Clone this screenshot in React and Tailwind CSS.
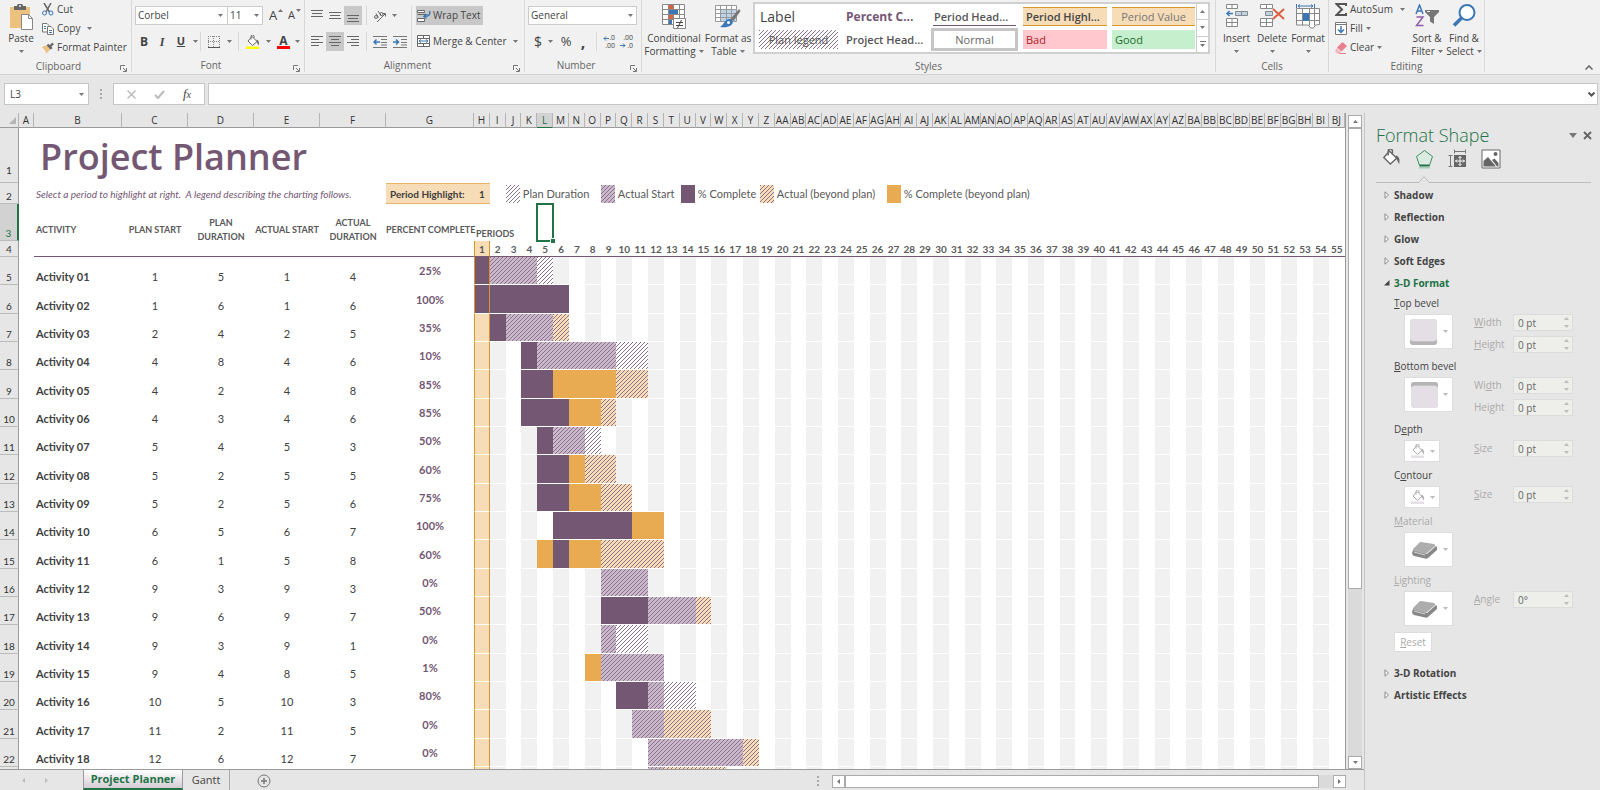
const columns = [
  "H", "I", "J", "K", "L", "M", "N", "O", "P", "Q", "R", "S", "T", "U", "V", "W", "X", "Y", "Z",
  ..."ABCDEFGHIJKLMNOPQRSTUVWXYZ".split("").map((c) => "A" + c),
  ..."ABCDEFGHIJ".split("").map((c) => "B" + c),
];

// bars: [kind, first period, last period]
// c = complete, a = actual, p = plan, y = complete beyond plan, b = actual beyond plan
const activities = [
  { plan: [1, 5], actual: [1, 4], pct: 25, bars: [["c", 1, 1], ["a", 2, 4], ["p", 5, 5]] },
  { plan: [1, 6], actual: [1, 6], pct: 100, bars: [["c", 1, 6]] },
  { plan: [2, 4], actual: [2, 5], pct: 35, bars: [["c", 2, 2], ["a", 3, 5], ["b", 6, 6]] },
  { plan: [4, 8], actual: [4, 6], pct: 10, bars: [["c", 4, 4], ["a", 5, 9], ["p", 10, 11]] },
  { plan: [4, 2], actual: [4, 8], pct: 85, bars: [["c", 4, 5], ["y", 6, 9], ["b", 10, 11]] },
  { plan: [4, 3], actual: [4, 6], pct: 85, bars: [["c", 4, 6], ["y", 7, 8], ["b", 9, 9]] },
  { plan: [5, 4], actual: [5, 3], pct: 50, bars: [["c", 5, 5], ["a", 6, 7], ["p", 8, 8]] },
  { plan: [5, 2], actual: [5, 5], pct: 60, bars: [["c", 5, 6], ["y", 7, 7], ["b", 8, 9]] },
  { plan: [5, 2], actual: [5, 6], pct: 75, bars: [["c", 5, 6], ["y", 7, 8], ["b", 9, 10]] },
  { plan: [6, 5], actual: [6, 7], pct: 100, bars: [["c", 6, 10], ["y", 11, 12]] },
  { plan: [6, 1], actual: [5, 8], pct: 60, bars: [["y", 5, 5], ["c", 6, 6], ["y", 7, 8], ["b", 9, 12]] },
  { plan: [9, 3], actual: [9, 3], pct: 0, bars: [["a", 9, 11]] },
  { plan: [9, 6], actual: [9, 7], pct: 50, bars: [["c", 9, 11], ["a", 12, 14], ["b", 15, 15]] },
  { plan: [9, 3], actual: [9, 1], pct: 0, bars: [["a", 9, 9], ["p", 10, 11]] },
  { plan: [9, 4], actual: [8, 5], pct: 1, bars: [["y", 8, 8], ["a", 9, 12]] },
  { plan: [10, 5], actual: [10, 3], pct: 80, bars: [["c", 10, 11], ["a", 12, 12], ["p", 13, 14]] },
  { plan: [11, 2], actual: [11, 5], pct: 0, bars: [["a", 11, 12], ["b", 13, 15]] },
  { plan: [12, 6], actual: [12, 7], pct: 0, bars: [["a", 12, 17], ["b", 18, 18]] },
];

const purpleHatch =
  "bg-[linear-gradient(135deg,#8a708a_12.5%,transparent_12.5%,transparent_50%,#8a708a_50%,#8a708a_62.5%,transparent_62.5%)] bg-[length:4px_4px]";

const fills = {
  c: "bg-[#735773]",
  y: "bg-[#e8ab52]",
  a: "bg-[#c9b9cb] " + purpleHatch,
  p: "bg-white " + purpleHatch,
  b: "bg-[#f6dcb7] " + purpleHatch,
};

const legend = [
  ["p", "Plan Duration", "w-[95px]"],
  ["a", "Actual Start", "w-[80px]"],
  ["c", "% Complete", "w-[79px]"],
  ["b", "Actual (beyond plan)", "w-[127px]"],
  ["y", "% Complete (beyond plan)", "w-[150px]"],
];

// Splits a row into table cells: period 1 always stands alone, bars span their periods
function segments(bars) {
  const out = [];
  let p = 1;
  while (p <= 55) {
    const bar = bars.find((b) => b[1] <= p && b[2] >= p);
    if (bar && p > 1) {
      out.push({ from: p, span: bar[2] - p + 1, kind: bar[0] });
      p = bar[2] + 1;
    } else {
      out.push({ from: p, span: 1, kind: bar ? bar[0] : null });
      p += 1;
    }
  }
  return out;
}

function Caret({ className = "" }) {
  return (
    <svg viewBox="0 0 5 3" className={"w-[5px] h-[3px] shrink-0 fill-[#777] " + className}>
      <path d="M0 0h5L2.5 3z" />
    </svg>
  );
}

function Group({ label, width, launcher, children }) {
  return (
    <section className={"relative flex flex-col shrink-0 border-r border-[#d8d8d8] h-[72px] " + width}>
      <div className="h-[60px]">{children}</div>
      <div className={"text-center leading-[14px] text-[#666] pt-[1px] " + (launcher ? "pr-[14px]" : "")}>{label}</div>
      {launcher && (
        <button aria-label={label + " settings"} className="absolute right-1 bottom-0">
          <svg viewBox="0 0 7 7" className="size-[7px]" fill="none" stroke="#777">
            <path d="M.5 5V.5H5M3 3l3 3M6.5 3v3.5H3" />
          </svg>
        </button>
      )}
    </section>
  );
}

function BigButton({ icon, lines, width }) {
  return (
    <button className={"flex flex-col items-center pt-1 leading-[13px] shrink-0 " + width}>
      <span className="h-7 flex items-start justify-center">{icon}</span>
      <span className="whitespace-nowrap">{lines[0]}</span>
      <span className="flex items-center gap-[3px] h-[13px] whitespace-nowrap">
        {lines[1]}
        <Caret />
      </span>
    </button>
  );
}

function ToolButton({ label, width = "w-[18px]", active, children }) {
  return (
    <button
      aria-label={label}
      className={"h-[19px] flex items-center justify-center shrink-0 " + width + (active ? " bg-[#c8c8c8]" : "")}
    >
      {children}
    </button>
  );
}

function Divider() {
  return <span className="w-px h-[19px] bg-[#d8d8d8] shrink-0" />;
}

// Horizontal rules of varying length used by all the paragraph icons
function Lines({ rows }) {
  return (
    <svg viewBox="0 0 13 13" className="size-[13px]" stroke="#666" fill="none">
      {rows.map(([x1, x2, y]) => (
        <path key={y} d={`M${x1} ${y}.5H${x2}`} />
      ))}
    </svg>
  );
}

function Indent({ flip }) {
  return (
    <svg viewBox="0 0 14 12" className="w-[14px] h-3" fill="none" stroke="#777">
      <path d="M0 .5h14M8 3.5h6M8 6.5h6M8 9h6M0 11.5h14" />
      <path d={flip ? "M0 6h5M3 3.5L5.5 6 3 8.5" : "M1 6h6M3.5 3.5L1 6l2.5 2.5"} stroke="#3c77b5" strokeWidth="1.5" />
    </svg>
  );
}

function Bucket({ color, underline, size = "size-[14px]" }) {
  return (
    <svg viewBox="0 0 14 14" className={size} fill="none">
      <path d="M6 1.5l5 5-4.5 4L2 6z" fill="#fff" stroke={color} />
      <path d="M5 4.5V1.5a1.5 1.5 0 0 1 3 0V3" stroke={color} />
      <path d="M10.500 4.5c2 .5 3 2.5 2.2 6-.8-1-1.2-2.5-2.2-4z" fill={color} />
      {underline && <path d="M0 11.5h13V14H0z" fill={underline} />}
    </svg>
  );
}

function ClipboardGroup() {
  return (
    <Group label="Clipboard" width="w-[132px]" launcher>
      <div className="flex">
        <BigButton
          width="w-[42px]"
          lines={["Paste", ""]}
          icon={
            <svg viewBox="0 0 24 26" className="w-6 h-[26px]">
              <path d="M1 3h20v21H1z" fill="#edc17e" />
              <path d="M5 2h3a3 2.5 0 0 1 6 0h3v4H5z" fill="#666" />
              <circle cx="11" cy="2" r="1" fill="#f1f1f1" />
              <path d="M12.5 10.5h7l4 4v11h-11z" fill="#fff" stroke="#888" />
              <path d="M19.5 10.5v4h4" fill="none" stroke="#888" />
            </svg>
          }
        />
        <div className="flex flex-col">
          <button className="flex items-center gap-[3px] h-[19px]">
            <svg viewBox="0 0 12 13" className="w-3 h-[13px]" fill="none">
              <path d="M2 0l5.5 9M9 0L4 9" stroke="#666" strokeWidth="1.5" />
              <circle cx="2.5" cy="10" r="2" stroke="#3c77b5" />
              <circle cx="9" cy="10" r="2" stroke="#3c77b5" />
            </svg>
            Cut
          </button>
          <button className="flex items-center gap-[3px] h-[19px]">
            <svg viewBox="0 0 12 12" className="size-3" fill="#fff" stroke="#777">
              <path d="M.5 .5H5l2 2V9H.5z" />
              <path d="M5.5 3.5H9l2.5 2.5v5.5h-6z" />
              <path d="M2 3.5h2M2 5.5h2M7 7.5h3M7 9.5h3" stroke="#3c77b5" />
            </svg>
            Copy
            <Caret className="ml-1" />
          </button>
          <button className="flex items-center gap-[3px] h-[19px] whitespace-nowrap">
            <svg viewBox="0 0 13 12" className="w-3 h-3">
              <path d="M0 5l5-2 4 4.5L4.5 12C4 9 2 7 0 5z" fill="#edc17e" />
              <path d="M5 3l2-1.5L8.5 3 11 0l2 2-2.8 2.5 1.3 1.7L9 7.5z" fill="#666" />
            </svg>
            Format Painter
          </button>
        </div>
      </div>
    </Group>
  );
}

function FontGroup() {
  return (
    <Group label="Font" width="w-[173px]" launcher>
      <div className="flex flex-col gap-[7px] pt-[6px] pl-[3px]">
        <div className="flex items-center h-[19px]">
          <div className="relative flex items-center">
            <select aria-label="Font name" className="appearance-none w-[93px] h-[19px] px-[2px] bg-white border border-[#ccc]">
              <option>Corbel</option>
            </select>
            <Caret className="absolute right-[5px]" />
          </div>
          <div className="relative flex items-center -ml-px">
            <select aria-label="Font size" className="appearance-none w-[36px] h-[19px] px-[2px] bg-white border border-[#ccc]">
              <option>11</option>
            </select>
            <Caret className="absolute right-[4px]" />
          </div>
          <button className="relative ml-[6px] w-[19px] text-left text-[13px]">
            A<Caret className="absolute top-[3px] left-[9px] rotate-180 fill-[#3c77b5]" />
          </button>
          <button className="relative w-[16px] text-left text-[11px]">
            A<Caret className="absolute top-[2px] left-[8px] fill-[#3c77b5]" />
          </button>
        </div>
        <div className="flex items-center h-[19px]">
          <button className="w-[18px] text-[12px] font-bold">B</button>
          <button className="w-[18px] text-[12px] italic font-semibold font-['Liberation_Serif',serif]">I</button>
          <button className="w-[20px] text-[11px] font-bold underline">U</button>
          <ToolButton label="Underline style" width="w-[9px]"><Caret /></ToolButton>
          <Divider />
          <ToolButton label="Borders" width="w-[26px]">
            <svg viewBox="0 0 12 12" className="size-3" fill="none" stroke="#888">
              <path d="M.5 0v11M5.5 0v11M11.5 0v11M0 .5h12M0 5.5h12" strokeDasharray="1 1" />
              <path d="M0 11.5h12" stroke="#555" />
            </svg>
          </ToolButton>
          <Caret />
          <span className="w-[6px]" />
          <Divider />
          <ToolButton label="Fill color" width="w-[27px]">
            <Bucket color="#666" underline="#ffff00" />
          </ToolButton>
          <Caret />
          <button aria-label="Font color" className="w-[13px] h-[14px] ml-[6px] border-b-[3px] border-[#f00] text-[12px] leading-[11px] font-bold">
            A
          </button>
          <Caret className="ml-[5px]" />
        </div>
      </div>
    </Group>
  );
}

function AlignmentGroup() {
  return (
    <Group label="Alignment" width="w-[220px]" launcher>
      <div className="flex pt-[6px] pl-[3px]">
        <div className="flex flex-col gap-[7px]">
          <div className="flex items-center">
            <ToolButton label="Top align"><Lines rows={[[0, 12, 1], [1, 11, 4], [0, 12, 7]]} /></ToolButton>
            <ToolButton label="Middle align"><Lines rows={[[0, 12, 3], [1, 11, 6], [0, 12, 9]]} /></ToolButton>
            <ToolButton label="Bottom align" active><Lines rows={[[0, 12, 6], [1, 11, 9], [0, 12, 12]]} /></ToolButton>
            <span className="w-[4px]" />
            <Divider />
            <ToolButton label="Orientation" width="w-[25px]">
              <svg viewBox="0 0 14 12" className="w-[14px] h-3" fill="none" stroke="#666">
                <circle cx="3" cy="7" r="1.5" />
                <path d="M3 3.5l2.5 4M5 1l3.5 5M4 12L12 4M9.5 3.5h3v3" />
                <circle cx="8.5" cy="4" r="1.5" />
              </svg>
            </ToolButton>
            <Caret />
          </div>
          <div className="flex items-center">
            <ToolButton label="Align left"><Lines rows={[[0, 12, 1], [0, 8, 4], [0, 12, 7], [0, 8, 10]]} /></ToolButton>
            <ToolButton label="Center" active><Lines rows={[[0, 12, 1], [2, 10, 4], [0, 12, 7], [2, 10, 10]]} /></ToolButton>
            <ToolButton label="Align right"><Lines rows={[[0, 12, 1], [4, 12, 4], [0, 12, 7], [4, 12, 10]]} /></ToolButton>
            <span className="w-[4px]" />
            <Divider />
            <ToolButton label="Decrease indent" width="w-[25px]"><Indent /></ToolButton>
            <ToolButton label="Increase indent" width="w-[15px]"><Indent flip /></ToolButton>
          </div>
        </div>
        <div className="flex flex-col gap-[7px] ml-1 border-l border-[#d8d8d8] pl-1 h-[45px]">
          <button className="flex items-center gap-[2px] h-[19px] w-[67px] pl-[1px] bg-[#c8c8c8] whitespace-nowrap">
            <svg viewBox="0 0 14 14" className="size-[14px]" fill="none">
              <path d="M.5 1.5h7v2h-7zM.5 9.5h7v3h-7z" fill="#fff" stroke="#666" />
              <path d="M.5 5.5h10" stroke="#666" />
              <path d="M12.5 2c1 4-1 5.5-5 5.5M9.5 5L7 7.5l2.5 2" stroke="#3c77b5" strokeWidth="1.5" />
            </svg>
            Wrap Text
          </button>
          <button className="flex items-center gap-[2px] h-[19px] pl-[1px] whitespace-nowrap">
            <svg viewBox="0 0 14 13" className="w-[14px] h-[13px]" fill="#fff" stroke="#666">
              <path d="M.5 .5h12v11H.5zM.5 3.5h12M.5 8.5h12M6.5 .5v3M6.5 8.5v3" />
              <path d="M2 6h9M4 4.5L2 6l2 1.5M9 4.5L11 6 9 7.5" stroke="#3c77b5" fill="none" />
            </svg>
            Merge &amp; Center
            <Caret className="ml-1" />
          </button>
        </div>
      </div>
    </Group>
  );
}

function NumberGroup() {
  return (
    <Group label="Number" width="w-[117px]" launcher>
      <div className="flex flex-col gap-[7px] pt-[6px] pl-[3px]">
        <div className="relative flex items-center">
          <select aria-label="Number format" className="appearance-none w-[109px] h-[19px] px-[2px] bg-white border border-[#ccc]">
            <option>General</option>
          </select>
          <Caret className="absolute left-[100px]" />
        </div>
        <div className="flex items-center h-[19px]">
          <button className="w-[20px] text-[14px]">$</button>
          <Caret />
          <button className="w-[26px] text-[13px]">%</button>
          <button className="w-[8px] h-[19px] text-[16px] leading-[10px] font-bold">,</button>
          <span className="w-[9px]" />
          <Divider />
          <button aria-label="Increase decimal" className="relative flex flex-col items-end w-[23px] text-[7px] leading-[8px] pr-[5px]">
            <svg viewBox="0 0 6 5" className="absolute left-[6px] top-[2px] w-[6px] h-[5px]" fill="none" stroke="#3c77b5">
              <path d="M6 2.5H1M3 .5l-2 2 2 2" />
            </svg>
            <span>.0</span>
            <span>.00</span>
          </button>
          <button aria-label="Decrease decimal" className="relative flex flex-col items-end w-[18px] text-[7px] leading-[8px] pr-[5px]">
            <span>.00</span>
            <span>.0</span>
            <svg viewBox="0 0 6 5" className="absolute left-0 bottom-[2px] w-[6px] h-[5px]" fill="none" stroke="#3c77b5">
              <path d="M0 2.5h5M3 .5l2 2-2 2" />
            </svg>
          </button>
        </div>
      </div>
    </Group>
  );
}

function StylesGroup() {
  const cell = "flex items-center h-[19px] leading-[15px] whitespace-nowrap ";
  return (
    <Group label="Styles" width="w-[574px]">
      <div className="flex">
        <BigButton
          width="w-[64px]"
          lines={["Conditional", "Formatting"]}
          icon={
            <svg viewBox="0 0 26 26" className="size-[26px]">
              <path d="M1.5 .5h22v20h-22z" fill="#fff" stroke="#888" />
              <path d="M1.5 5.5h22M1.5 10.5h22M1.5 15.5h22M7.5 .5v20M12.5 .5v20M18.5 .5v20" stroke="#888" />
              <path d="M8 1h4v4H8zM8 11h4v4H8z" fill="#dc6140" />
              <path d="M8 6h9v4H8zM8 16h3v4H8z" fill="#3c77b5" />
              <path d="M12.5 14.5h12v10h-12z" fill="#fff" stroke="#888" />
              <path d="M15 18.5h7M15 21.5h7M20.5 16l-4 8" stroke="#444" />
            </svg>
          }
        />
        <BigButton
          width="w-[44px]"
          lines={["Format as", "Table"]}
          icon={
            <svg viewBox="0 0 26 26" className="size-[26px]">
              <path d="M.5 1.5h21v16H.5z" fill="#fff" stroke="#999" />
              <path d="M6 6h15v11H6z" fill="#bcd3ea" />
              <path d="M.5 5.5h21M.5 9.5h21M.5 13.5h21M5.5 1.5v16M11.5 1.5v16M16.5 1.5v16" stroke="#999" />
              <path d="M24 5l1.5 2-7 10-3-2z" fill="#777" />
              <path d="M14 15c3 0 4.5 2 3.5 4.5C15.5 23 9 24 5 23c4-2 4-7 9-8z" fill="#3c77b5" />
              <circle cx="13.5" cy="18.5" r="1.5" fill="#fff" />
            </svg>
          }
        />
        <div className="flex mt-[2px] ml-[3px] h-[52px] w-[457px] border-2 border-[#d0d0d0] bg-white">
          <div className="grid grid-cols-[79px_83px_87px_84px_83px] gap-x-[5px] gap-y-1 pt-[3px] pl-[4px] flex-1 content-start">
            <button className={cell + "pl-[1px] text-[14px]"}>Label</button>
            <button className={cell + "pl-[3px] text-[12px] font-bold text-[#735773]"}>Percent C...</button>
            <button className={cell + "mx-[2px] pl-[1px] text-[11px] font-semibold text-[#555] border-b border-[#735773]"}>Period Head...</button>
            <button className={cell + "pl-[3px] text-[11px] font-semibold bg-[#f6dcb7] border-y border-[#d9962c]"}>Period Highl...</button>
            <button className={cell + "justify-center text-[11px] text-[#777] bg-[#f6dcb7] border-y border-[#d9962c]"}>Period Value</button>
            <button className={cell + "justify-center text-[11px] text-[#555] " + purpleHatch}>Plan legend</button>
            <button className={cell + "pl-[3px] text-[11px] font-semibold text-[#555]"}>Project Head...</button>
            <button className={cell + "justify-center text-[11px] text-[#666] h-[23px] -my-[2px] border-[3px] border-[#c6c6c6]"}>Normal</button>
            <button className={cell + "pl-[3px] text-[11px] bg-[#ffc7ce] text-[#b02025]"}>Bad</button>
            <button className={cell + "pl-[3px] text-[11px] bg-[#c6efce] text-[#1b6c2d]"}>Good</button>
          </div>
          <div className="flex flex-col w-[12px] border-l border-[#ccc] divide-y divide-[#ccc]">
            <button aria-label="Scroll up" className="flex-1 flex items-center justify-center"><Caret className="rotate-180" /></button>
            <button aria-label="Scroll down" className="flex-1 flex items-center justify-center"><Caret /></button>
            <button aria-label="More styles" className="flex-1 flex flex-col items-center justify-center gap-[2px]">
              <span className="w-[6px] h-px bg-[#777]" />
              <Caret />
            </button>
          </div>
        </div>
      </div>
    </Group>
  );
}

function CellsGroup() {
  return (
    <Group label="Cells" width="w-[113px]">
      <div className="flex pl-[3px]">
        <BigButton
          width="w-[35px]"
          lines={["Insert", ""]}
          icon={
            <svg viewBox="0 0 22 24" className="w-[22px] h-6" fill="#fff" stroke="#888">
              <path d="M.5 .5h11v4H.5zM6 .5v4M.5 14.5h11v8H.5zM.5 18.5h11M6 14.5v8" />
              <path d="M9.5 7.5h12v4h-12zM15.5 7.5v4" fill="#bcd3ea" />
              <path d="M7 9.5H1M3.5 7L1 9.5 3.5 12" stroke="#3c77b5" fill="none" strokeWidth="1.5" />
            </svg>
          }
        />
        <BigButton
          width="w-[36px]"
          lines={["Delete", ""]}
          icon={
            <svg viewBox="0 0 25 24" className="w-[25px] h-6" fill="#fff" stroke="#888">
              <path d="M.5 .5h12v4H.5zM6.5 .5v4M.5 14.5h12v8H.5zM.5 18.5h12M6.5 14.5v8" />
              <path d="M5.5 7.5h7v4h-7z" fill="#bcd3ea" />
              <path d="M13 5l11 10M24 5L13 15" stroke="#dc6140" strokeWidth="2" />
            </svg>
          }
        />
        <BigButton
          width="w-[36px]"
          lines={["Format", ""]}
          icon={
            <svg viewBox="0 0 24 25" className="w-6 h-[25px]" fill="#fff" stroke="#888">
              <path d="M.5 4.5h23v16l-4 .5-2 3h-3l-2-3H.5z" />
              <path d="M.5 9.5h23M.5 16.5h23M6.5 4.5v17M13.5 4.5v17M18.5 4.5v17" />
              <path d="M7 9h6v8H7z" fill="#3c77b5" stroke="none" />
              <path d="M.5 0v4M18.5 0v4M2 2h15M4 .5L2 2l2 1.5M15 .5L17 2l-2 1.5" stroke="#3c77b5" fill="none" />
            </svg>
          }
        />
      </div>
    </Group>
  );
}

function EditingGroup() {
  return (
    <Group label="Editing" width="w-[156px]">
      <div className="flex pl-[6px]">
        <div className="flex flex-col w-[73px]">
          <button className="flex items-center gap-[3px] h-[19px]">
            <svg viewBox="0 0 12 13" className="w-3 h-[13px]" fill="none" stroke="#555" strokeWidth="2">
              <path d="M11 3V1H1.5L7 6.5 1.5 12H11v-2" />
            </svg>
            AutoSum
            <Caret className="ml-1" />
          </button>
          <button className="flex items-center gap-[3px] h-[19px]">
            <svg viewBox="0 0 12 13" className="w-3 h-[13px]" fill="#fff" stroke="#777">
              <path d="M.5 .5h11v12H.5zM.5 2.5h11" />
              <path d="M6 4v6M3 7.5L6 10.5l3-3" stroke="#3c77b5" strokeWidth="1.5" fill="none" />
            </svg>
            Fill
            <Caret />
          </button>
          <button className="flex items-center gap-[3px] h-[19px]">
            <svg viewBox="0 0 12 12" className="size-3">
              <path d="M7.5 0L12 4 6.5 9.5 2 5.5z" fill="#e8808f" />
              <path d="M1.5 6l4.5 4-1.5 1.5H2L0 9z" fill="#f3b6bf" />
              <path d="M4 11.5h7" stroke="#e8808f" />
            </svg>
            Clear
            <Caret />
          </button>
        </div>
        <BigButton
          width="w-[38px]"
          lines={["Sort &", "Filter"]}
          icon={
            <svg viewBox="0 0 25 24" className="w-[25px] h-6" fill="none">
              <path d="M1 10L4.5 1 8 10M2 7h5" stroke="#3c77b5" strokeWidth="1.5" />
              <path d="M1.5 13H8l-6.5 8.5H8.5" stroke="#8f5ba6" strokeWidth="1.5" />
              <path d="M10 6h14v2l-5 5v7l-4-2.5V13l-5-5z" fill="#777" />
              <path d="M12 7.5h3" stroke="#f1f1f1" />
            </svg>
          }
        />
        <BigButton
          width="w-[36px]"
          lines={["Find &", "Select"]}
          icon={
            <svg viewBox="0 0 24 24" className="size-6" fill="none" stroke="#3c77b5">
              <circle cx="15" cy="8.5" r="7.5" fill="#fff" strokeWidth="2" />
              <path d="M9.5 14L2 21.5" strokeWidth="3.5" />
            </svg>
          }
        />
      </div>
    </Group>
  );
}

function FormulaBar() {
  const box = "h-[22px] bg-white border border-[#c6c6c6] ";
  return (
    <div className="flex items-center pt-2 pb-2 pl-1 pr-[2px]">
      <div className="relative flex items-center">
        <input aria-label="Name box" defaultValue="L3" className={box + "w-[85px] px-[5px]"} />
        <Caret className="absolute right-[5px]" />
      </div>
      <svg viewBox="0 0 2 10" className="w-[2px] h-[10px] mx-[11px] fill-[#aaa]">
        <path d="M0 0h2v2H0zM0 4h2v2H0zM0 8h2v2H0z" />
      </svg>
      <div className={box + "flex items-center justify-around w-[92px] px-1"}>
        <button aria-label="Cancel">
          <svg viewBox="0 0 9 9" className="size-[9px]" stroke="#bbb" strokeWidth="1.5"><path d="M.5 .5l8 8M8.5 .5l-8 8" /></svg>
        </button>
        <button aria-label="Enter">
          <svg viewBox="0 0 11 9" className="w-[11px] h-[9px]" fill="none" stroke="#bbb" strokeWidth="2"><path d="M1 5l3 3 6-7" /></svg>
        </button>
        <button className="italic text-[13px] leading-[18px] font-['Liberation_Serif',serif]">
          f<span className="text-[10px]">x</span>
        </button>
      </div>
      <div className="relative flex flex-1 items-center ml-[3px]">
        <input aria-label="Formula" className={box + "w-full px-1"} />
        <svg viewBox="0 0 7 5" className="absolute right-[3px] w-[7px] h-[5px]" fill="none" stroke="#555" strokeWidth="2"><path d="M.5 .5l3 3 3-3" /></svg>
      </div>
    </div>
  );
}

function RowHead({ n, active, pad = "pb-px" }) {
  return (
    <th
      className={
        "px-0 pt-0 align-bottom text-center font-normal text-[10px] leading-[12px] border-b border-b-[#bbb] " +
        pad +
        (active
          ? " bg-[#d2d2d2] text-[#217346] border-r-2 border-r-[#217346]"
          : " bg-[#e6e6e6] text-[#333] border-r border-r-[#9a9a9a]")
      }
    >
      {n}
    </th>
  );
}

function Sheet() {
  const colHead = "p-0 font-normal text-[10px] leading-[14px] border-b border-b-[#9a9a9a] border-r border-r-[#b5b5b5] ";
  const head = "p-0 text-[9px] leading-[14px] font-bold text-[#595959] text-center border-b border-[#735773] ";
  return (
    <div className="flex-1 min-w-0 overflow-hidden bg-white border-r border-[#9a9a9a]">
      <table className="w-full table-fixed border-separate border-spacing-0 font-['Lato',sans-serif] text-[#404040]">
        <colgroup>
          <col className="w-[19px]" />
          <col className="w-[15px]" />
          <col className="w-[88px]" />
          <col className="w-[66px]" />
          <col className="w-[66px]" />
          <col className="w-[66px]" />
          <col className="w-[66px]" />
          <col className="w-[88px]" />
          {columns.map((c) => <col key={c} />)}
        </colgroup>
        <thead>
          <tr className="h-[14px] bg-[#e6e6e6] font-['Open_Sans',sans-serif] text-[#333]">
            <th aria-label="Select all" className={colHead}>
              <svg viewBox="0 0 8 8" className="size-[7px] ml-auto mr-[2px] fill-[#b5b5b5]"><path d="M8 0v8H0z" /></svg>
            </th>
            {["A", "B", "C", "D", "E", "F", "G"].map((c) => <th key={c} className={colHead}>{c}</th>)}
            {columns.map((c) => (
              <th key={c} className={colHead + (c === "L" ? "bg-[#d2d2d2] text-[#217346] border-b-[#217346]" : "")}>{c}</th>
            ))}
          </tr>
        </thead>
        <tbody>
          <tr className="h-[55px]">
            <RowHead n={1} pad="pb-[6px]" />
            <td />
            <td colSpan={61} className="p-0 pl-[6px] pt-1 align-top">
              <h1 className="font-['Open_Sans',sans-serif] text-[36px] leading-[50px] font-semibold text-[#735773]">Project Planner</h1>
            </td>
          </tr>
          <tr className="h-[21px]">
            <RowHead n={2} />
            <td />
            <td colSpan={5} className="p-0 pl-[2px] text-[10px] leading-[14px] italic text-[#735773] whitespace-pre">
              {"Select a period to highlight at right.  A legend describing the charting follows."}
            </td>
            <td className="p-0 pl-1 text-[10px] leading-[14px] font-bold bg-[#f6dcb7] border-y border-[#e9b466] whitespace-nowrap">Period Highlight:</td>
            <td className="p-0 text-center text-[10px] leading-[14px] font-bold bg-[#f6dcb7] border-y border-[#e9b466]">1</td>
            <td colSpan={54} className="p-0">
              <div className="flex pl-4 whitespace-nowrap text-[11px] leading-[16px] text-[#595959]">
                {legend.map(([kind, text, width]) => (
                  <div key={text} className={"flex items-center gap-[3px] " + width}>
                    <span className={"w-[14px] h-[18px] shrink-0 " + fills[kind]} />
                    {text}
                  </div>
                ))}
              </div>
            </td>
          </tr>
          <tr className="h-[37px]">
            <RowHead n={3} active />
            <td />
            <th rowSpan={2} className={head + "text-left pl-[2px]"}>ACTIVITY</th>
            <th rowSpan={2} className={head}>PLAN START</th>
            <th rowSpan={2} className={head}>PLAN<br />DURATION</th>
            <th rowSpan={2} className={head + "whitespace-nowrap"}>ACTUAL START</th>
            <th rowSpan={2} className={head}>ACTUAL<br />DURATION</th>
            <th rowSpan={2} className={head + "whitespace-nowrap"}>PERCENT COMPLETE</th>
            <th colSpan={4} className="p-0 pl-[2px] align-bottom text-left text-[9px] leading-[14px] font-bold text-[#595959]">PERIODS</th>
            <td className="relative p-0">
              <span className="absolute -inset-px border-2 border-[#217346]" />
              <span className="absolute -right-[2px] -bottom-[2px] size-[5px] bg-[#217346] border-l border-t border-white" />
            </td>
            <td colSpan={50} />
          </tr>
          <tr className="h-[16px]">
            <RowHead n={4} />
            <td />
            {columns.map((c, i) => (
              <th
                key={c}
                className={
                  "p-0 text-[10px] leading-[14px] font-bold text-[#595959] border-b border-b-[#735773] " +
                  (i === 0 ? "bg-[#f6dcb7] border-x border-x-[#d9962c]" : "")
                }
              >
                {i + 1}
              </th>
            ))}
          </tr>
          {activities.map((a, i) => (
            <tr key={i} className={i % 3 === 1 ? "h-[29px]" : "h-[28px]"}>
              <RowHead n={i + 5} />
              <td />
              <td className="p-0 pl-[2px] pt-[12px] text-[11px] leading-[14px] font-bold">
                Activity {String(i + 1).padStart(2, "0")}
              </td>
              {[...a.plan, ...a.actual].map((n, k) => (
                <td key={k} className="p-0 pt-[12px] text-[11px] leading-[14px] text-center">{n}</td>
              ))}
              <td className="p-0 text-[11px] leading-[14px] text-center font-bold text-[#735773]">{a.pct}%</td>
              <PeriodCells bars={a.bars} />
            </tr>
          ))}
          {/* row 23 only peeks out above the tab bar */}
          <tr className="h-[28px]">
            <RowHead />
            <td colSpan={7} />
            <PeriodCells bars={[["a", 12, 12], ["b", 13, 16]]} />
          </tr>
        </tbody>
      </table>
    </div>
  );
}

function PeriodCells({ bars }) {
  return segments(bars).map((s) => (
    <td
      key={s.from}
      colSpan={s.span}
      className={
        "p-0 border-b border-b-white " +
        (s.from === 1 ? "border-x border-x-[#d9962c] " : "") +
        (s.kind ? fills[s.kind] : s.from === 1 ? "bg-[#f6dcb7]" : s.from % 2 === 0 ? "bg-[#f1f1f1]" : "")
      }
    />
  ));
}

function VerticalScroll() {
  const button = "h-[13px] flex items-center justify-center bg-white border border-[#ababab]";
  return (
    <div className="flex flex-col w-[14px] ml-[2px] mr-[2px] pt-[2px]">
      <button aria-label="Scroll up" className={button}><Caret className="rotate-180" /></button>
      <div className="grow-[461] border border-[#ababab] bg-white" />
      <div className="grow-[168] bg-[#dadada]" />
      <button aria-label="Scroll down" className={button}><Caret /></button>
    </div>
  );
}

function BottomBar() {
  return (
    <footer className="flex items-start h-[21px] border-t border-[#9a9a9a] text-[11px] pr-[18px]">
      <div className="flex items-center gap-[18px] w-[83px] h-5 pl-[21px]">
        <button aria-label="Previous sheet"><Caret className="rotate-90 fill-[#bbb]" /></button>
        <button aria-label="Next sheet"><Caret className="-rotate-90 fill-[#bbb]" /></button>
      </div>
      <button className="w-[100px] h-[20px] border-x border-[#9a9a9a] border-b-2 border-b-[#217346] bg-linear-to-b from-white to-[#d5cdd5] font-bold text-[#217346] whitespace-nowrap">
        Project Planner
      </button>
      <button className="w-[47px] h-5 border-r border-[#ababab]">Gantt</button>
      <button aria-label="New sheet" className="ml-[27px] mt-1">
        <svg viewBox="0 0 14 14" className="size-[14px]" fill="none" stroke="#777">
          <circle cx="7" cy="7" r="6" />
          <path d="M7 4v6M4 7h6" strokeWidth="1.5" />
        </svg>
      </button>
      <svg viewBox="0 0 2 10" className="w-[2px] h-[10px] mt-[6px] ml-auto mr-[13px] fill-[#aaa]">
        <path d="M0 0h2v2H0zM0 4h2v2H0zM0 8h2v2H0z" />
      </svg>
      <div className="flex w-[514px] h-[13px] mt-[5px] bg-[#dadada]">
        <button aria-label="Scroll left" className="w-[13px] flex items-center justify-center bg-white border border-[#ababab]"><Caret className="rotate-90" /></button>
        <div className="w-[474px] bg-white border border-[#ababab]" />
        <button aria-label="Scroll right" className="w-[13px] ml-auto flex items-center justify-center bg-white border border-[#ababab]"><Caret className="-rotate-90" /></button>
      </div>
    </footer>
  );
}

function Section({ title, open }) {
  return (
    <button aria-expanded={!!open} className={"flex items-center gap-1 h-[22px] shrink-0 pl-2 font-bold " + (open ? "text-[#217346]" : "text-[#444]")}>
      <svg viewBox="0 0 6 8" className="w-[6px] h-2">
        {open ? <path d="M5.5 1v5.5H0z" fill="#444" /> : <path d="M1 .8L4.5 4 1 7.2z" fill="#fff" stroke="#888" />}
      </svg>
      {title}
    </button>
  );
}

// `u` is the index of the access-key letter
function Key({ text, u }) {
  return (
    <>
      {text.slice(0, u)}
      <u>{text[u]}</u>
      {text.slice(u + 1)}
    </>
  );
}

function Spin({ id, label, u, value = "0 pt" }) {
  return (
    <div className="flex items-center h-[17px]">
      <label htmlFor={id} className="w-[39px] text-[#aaa]">
        <Key text={label} u={u} />
      </label>
      <div className="relative">
        <input id={id} defaultValue={value} className="block w-[60px] h-[17px] px-1 bg-[#eeefeb] border border-[#dcdcdc] text-[#666]" />
        <Caret className="absolute right-1 top-[3px] rotate-180 fill-[#bbb]" />
        <Caret className="absolute right-1 bottom-[3px] fill-[#bbb]" />
      </div>
    </div>
  );
}

function Setting({ label, u, muted, tall, icon, children }) {
  return (
    <div className="shrink-0">
      <div className={"h-[18px] leading-[18px] pl-[18px] " + (muted ? "text-[#aaa]" : "text-[#444]")}>
        <Key text={label} u={u} />
      </div>
      <div className="flex items-start mt-[2px] mb-1 pl-[28px]">
        <div className="w-[70px]">
          <button
            aria-label={label}
            className={"flex items-center justify-between bg-white border border-[#ddd] pr-1 " + (tall ? "w-[49px] h-[35px] pl-[5px]" : "w-[36px] h-[22px] pl-[6px]")}
          >
            {icon}
            <Caret className="fill-[#bbb]" />
          </button>
        </div>
        <div className="flex flex-col gap-[5px]">{children}</div>
      </div>
    </div>
  );
}

function Bevel({ flip }) {
  return (
    <svg viewBox="0 0 28 28" className={"size-7" + (flip ? " rotate-180" : "")}>
      <rect x="0" y="1" width="27" height="26" rx="4" fill="#c4c2c4" />
      <path d="M0 20l3 4h21l3-4v4a3 3 0 0 1-3 3H3a3 3 0 0 1-3-3z" fill="#b5b5b5" />
      <path d="M4 1h19a4 4 0 0 1 4 4v15a3 3 0 0 1-3 3H3a3 3 0 0 1-3-3V5a4 4 0 0 1 4-4z" fill="#e3dfe4" />
    </svg>
  );
}

function Slab() {
  return (
    <svg viewBox="0 0 28 18" className="w-7 h-[18px]">
      <path d="M2 12l1-3 14 4 9-8 1 1v3l-9 8q-1 1-3 .5L4 15q-2-1-2-3z" fill="#888" />
      <path d="M11 1l13 2q2 1 .5 2.5L17 12q-1 1-3 .5L4 10q-2-1-.5-2.5L9 2q1-1 2-1z" fill="#adadad" />
      <path d="M4 11l11 3" stroke="#d5d5d5" fill="none" />
    </svg>
  );
}

function FormatPane() {
  return (
    <aside className="w-[236px] shrink-0 border-l border-[#c6c6c6] pl-[11px] flex flex-col">
      <div className="flex items-center h-[26px] mt-[9px] pr-2">
        <h2 className="flex-1 font-light text-[18px] leading-[26px] text-[#217346]">Format Shape</h2>
        <button aria-label="Pane options"><Caret className="w-[8px] h-[5px] mr-[6px]" /></button>
        <button aria-label="Close pane">
          <svg viewBox="0 0 9 9" className="size-[9px]" stroke="#666" strokeWidth="2"><path d="M1 1l7 7M8 1L1 8" /></svg>
        </button>
      </div>
      <div className="flex gap-[14px] pl-[5px] pt-[1px] h-[28px] items-start shrink-0">
        <button aria-label="Fill and line"><Bucket color="#666" size="size-5" /></button>
        <button aria-label="Effects">
          <svg viewBox="0 0 19 20" className="w-[19px] h-5">
            <path d="M9.5 1.5L17.5 7.5 14.5 16.5h-10L1.5 7.5z" fill="#dcebe1" stroke="#3f9060" />
            <path d="M4.500 15.5h10v2h-10z" fill="#217346" />
            <path d="M4 18h11v1.500H4z" fill="#a8cdb6" />
          </svg>
        </button>
        <button aria-label="Size and properties">
          <svg viewBox="0 0 19 20" className="w-[19px] h-5" fill="none" stroke="#777">
            <path d="M6 2.5h12M6.5 .5v4M17.5 .5v4M2.5 6v12M.5 6.5h4M.5 17.5h4" />
            <path d="M6 6h12v12H6z" fill="#666" stroke="none" />
            <path d="M12 7.5v9M7.5 12h9M10.5 9L12 7.5 13.5 9M10.5 15l1.5 1.5 1.5-1.5M9 10.5L7.5 12 9 13.5M15 10.5l1.5 1.5-1.5 1.5" stroke="#fff" />
          </svg>
        </button>
        <button aria-label="Picture">
          <svg viewBox="0 0 20 20" className="size-5">
            <path d="M1 1h18v18H1z" fill="#fff" stroke="#666" />
            <path d="M2.5 17.5V12L7 8l8 9.5zM11 11l2.5-1.5 4 4.5v3.5H16z" fill="#666" />
            <circle cx="14.5" cy="5" r="2" fill="#666" />
          </svg>
        </button>
      </div>
      <svg viewBox="0 0 215 8" className="w-[215px] h-2 shrink-0" fill="none" stroke="#bdbdbd">
        <path d="M0 6.5h43l5-6 5 6h162" />
      </svg>
      <Section title="Shadow" />
      <Section title="Reflection" />
      <Section title="Glow" />
      <Section title="Soft Edges" />
      <Section title="3-D Format" open />
      <Setting label="Top bevel" u={0} tall icon={<Bevel />}>
        <Spin id="top-width" label="Width" u={0} />
        <Spin id="top-height" label="Height" u={0} />
      </Setting>
      <Setting label="Bottom bevel" u={0} tall icon={<Bevel flip />}>
        <Spin id="bottom-width" label="Width" u={2} />
        <Spin id="bottom-height" label="Height" u={3} />
      </Setting>
      <Setting label="Depth" u={1} icon={<Bucket color="#aaa" underline="#e3dfe4" />}>
        <Spin id="depth-size" label="Size" u={0} />
      </Setting>
      <Setting label="Contour" u={1} icon={<Bucket color="#aaa" underline="#e3dfe4" />}>
        <Spin id="contour-size" label="Size" u={0} />
      </Setting>
      <Setting label="Material" u={0} muted tall icon={<Slab />} />
      <Setting label="Lighting" u={0} muted tall icon={<Slab />}>
        <Spin id="angle" label="Angle" u={0} value="0°" />
      </Setting>
      <button className="ml-[18px] mt-[2px] mb-[10px] w-[38px] h-5 shrink-0 bg-white border border-[#ddd] text-[#aaa]">
        <Key text="Reset" u={0} />
      </button>
      <Section title="3-D Rotation" />
      <Section title="Artistic Effects" />
    </aside>
  );
}

export default function App() {
  return (
    <div className="flex flex-col h-screen overflow-hidden bg-[#e6e6e6] font-['Open_Sans',sans-serif] text-[10px] text-[#444]">
      <header className="relative flex h-[75px] shrink-0 bg-[#f1f1f1] border-b border-[#d2d2d2]">
        <ClipboardGroup />
        <FontGroup />
        <AlignmentGroup />
        <NumberGroup />
        <StylesGroup />
        <CellsGroup />
        <EditingGroup />
        <button aria-label="Collapse ribbon" className="absolute right-[7px] bottom-1">
          <svg viewBox="0 0 8 5" className="w-2 h-[5px]" fill="none" stroke="#666" strokeWidth="1.5"><path d="M.5 4.5L4 1l3.5 3.5" /></svg>
        </button>
      </header>
      <FormulaBar />
      <main className="flex flex-1 min-h-0">
        <div className="flex flex-col flex-1 min-w-0">
          <div className="flex flex-1 min-h-0">
            <Sheet />
            <VerticalScroll />
          </div>
          <BottomBar />
        </div>
        <FormatPane />
      </main>
    </div>
  );
}
